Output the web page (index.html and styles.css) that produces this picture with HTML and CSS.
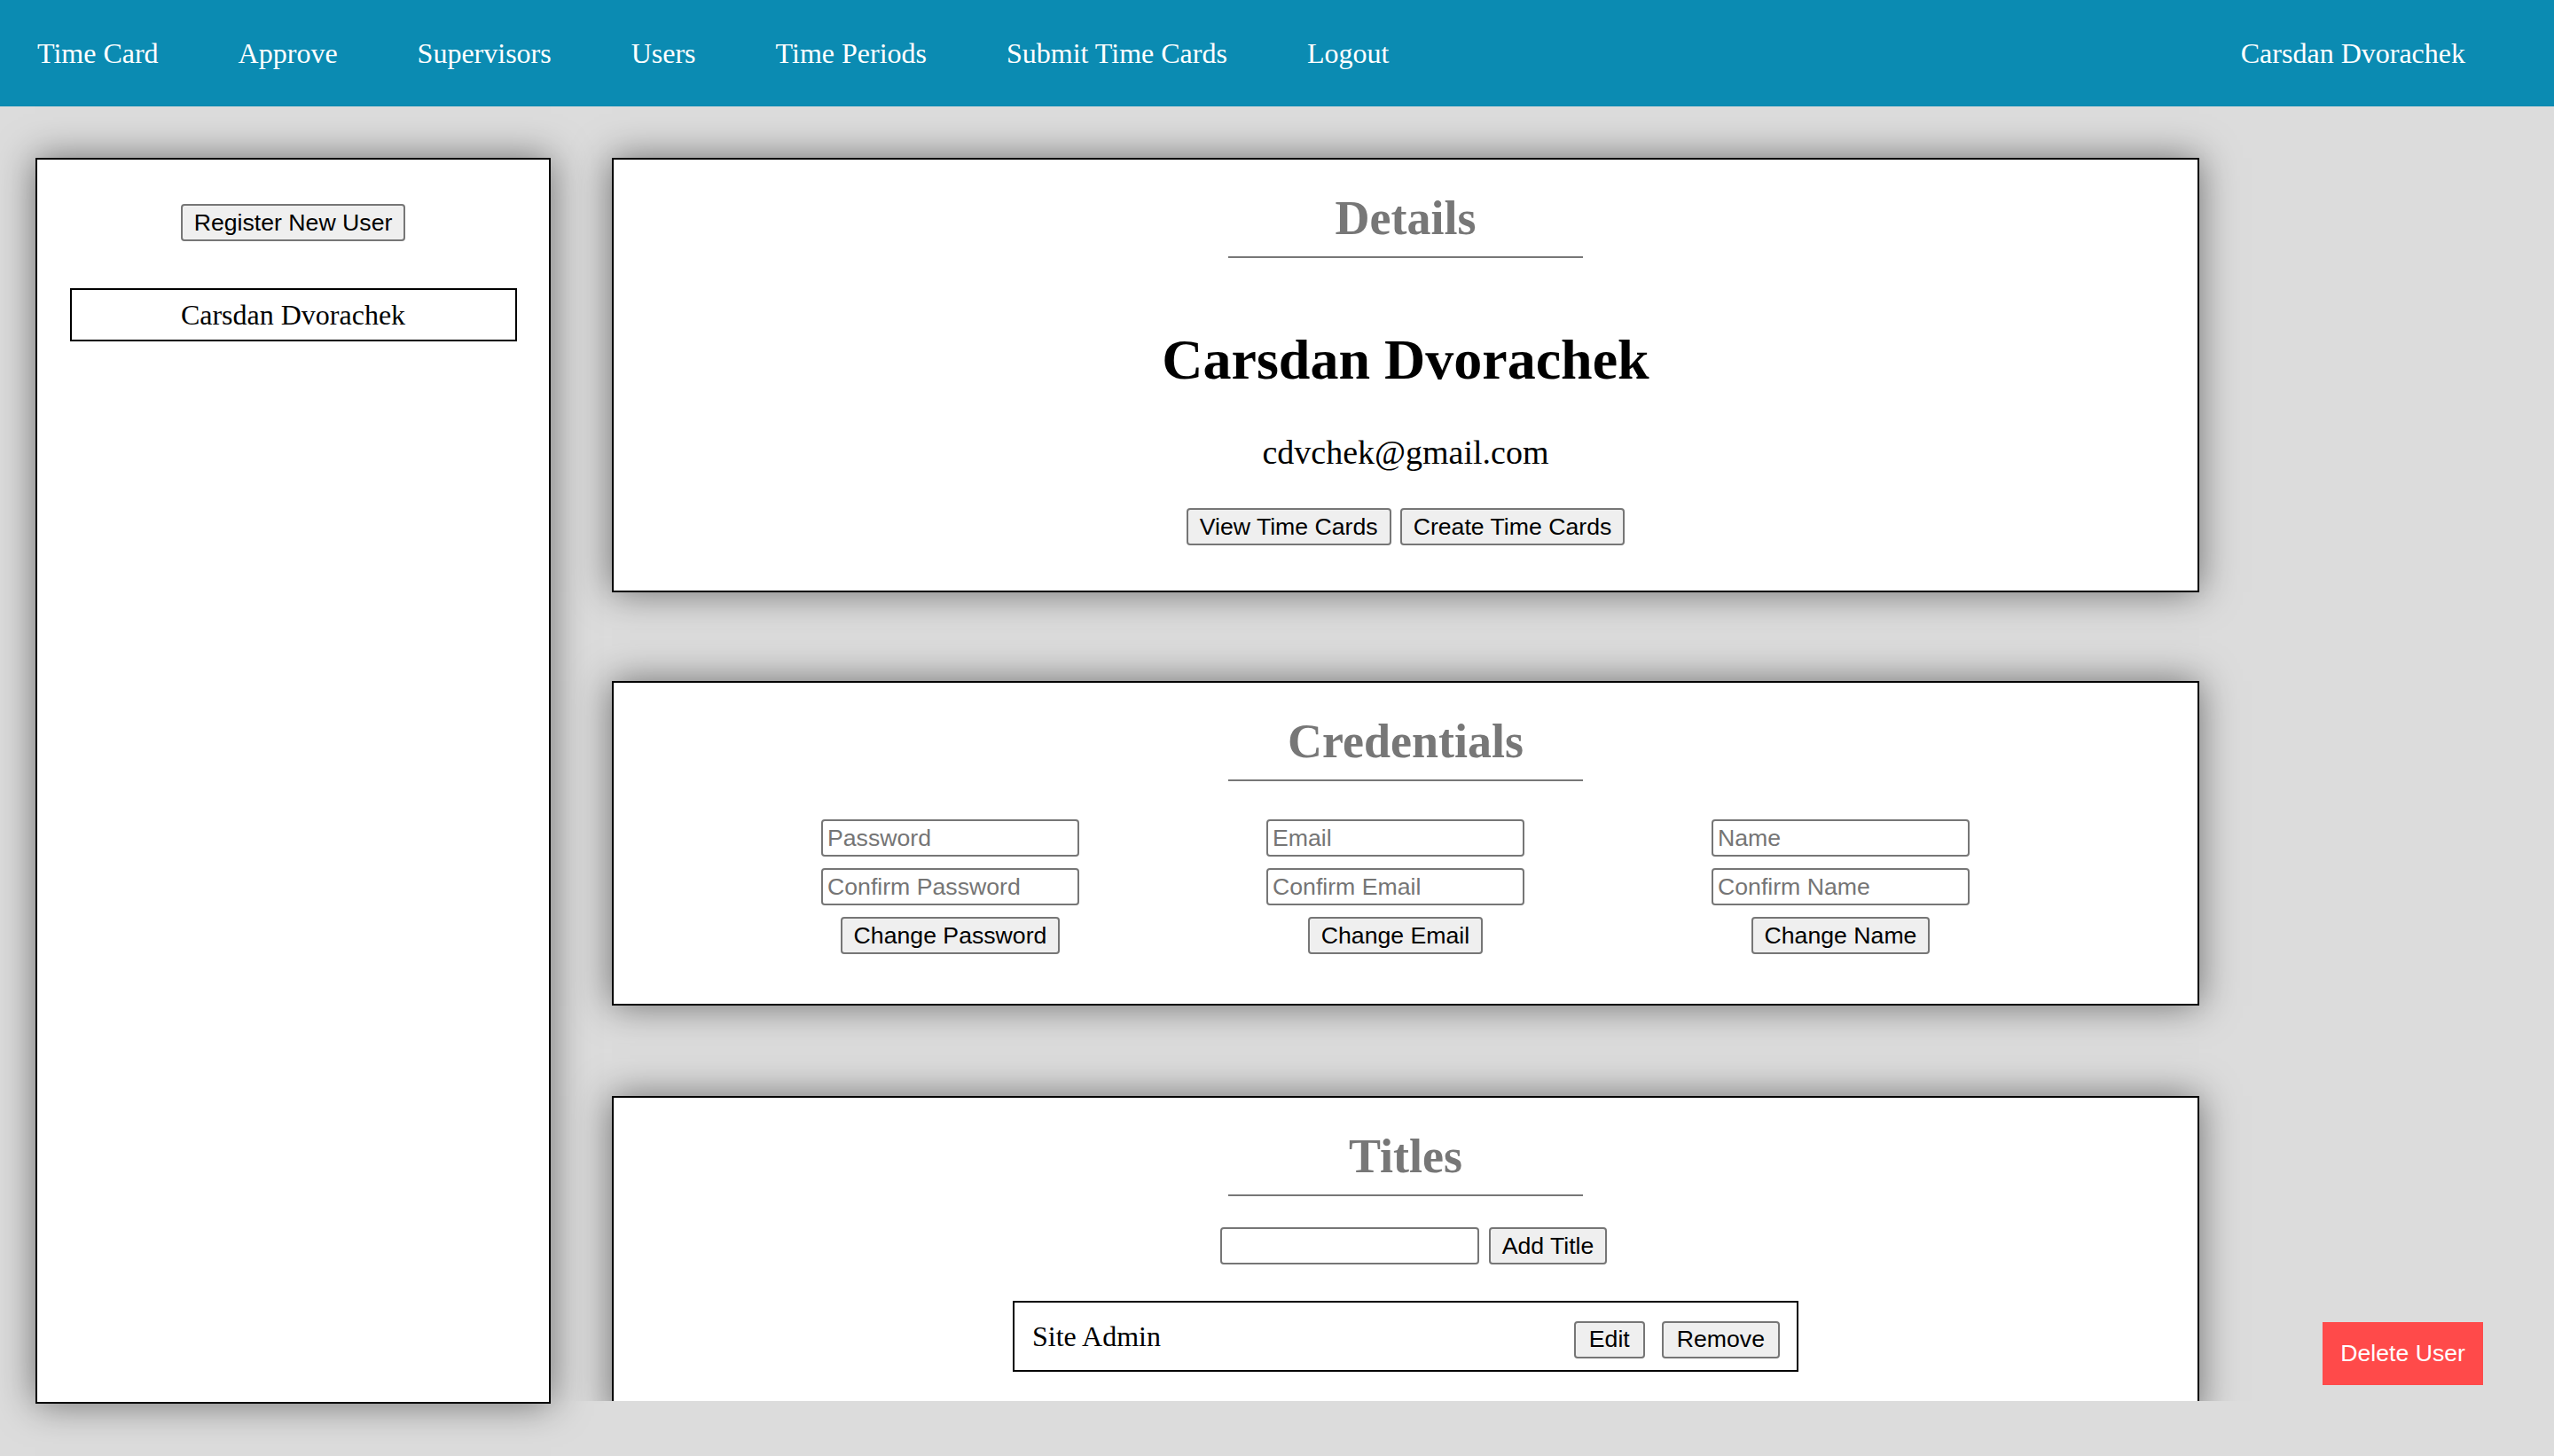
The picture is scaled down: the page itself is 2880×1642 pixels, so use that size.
FILE: index.html
```html
<!DOCTYPE html>
<html lang="en">
<head>
<meta charset="utf-8">
<title>Users</title>
<link rel="stylesheet" href="styles.css">
</head>
<body>
<nav class="topbar">
  <div class="nav-links">
    <a class="nav-link" href="#">Time Card</a>
    <a class="nav-link" href="#">Approve</a>
    <a class="nav-link" href="#">Supervisors</a>
    <a class="nav-link" href="#">Users</a>
    <a class="nav-link" href="#">Time Periods</a>
    <a class="nav-link" href="#">Submit Time Cards</a>
    <a class="nav-link" href="#">Logout</a>
  </div>
  <div class="nav-user">Carsdan Dvorachek</div>
</nav>
<div class="layout">
  <aside class="sidebar">
    <div class="sidebar-panel">
      <button class="btn">Register New User</button>
      <div class="user-item">Carsdan Dvorachek</div>
    </div>
  </aside>
  <main class="content">
    <section class="panel panel-details">
      <h2 class="panel-title">Details</h2>
      <h1 class="user-name">Carsdan Dvorachek</h1>
      <p class="user-email">cdvchek@gmail.com</p>
      <div class="details-actions">
        <button class="btn">View Time Cards</button>
        <button class="btn">Create Time Cards</button>
      </div>
    </section>
    <section class="panel panel-credentials">
      <h2 class="panel-title">Credentials</h2>
      <div class="cred-grid">
        <div class="cred-col">
          <input class="field" type="password" placeholder="Password">
          <input class="field" type="password" placeholder="Confirm Password">
          <button class="btn">Change Password</button>
        </div>
        <div class="cred-col">
          <input class="field" type="text" placeholder="Email">
          <input class="field" type="text" placeholder="Confirm Email">
          <button class="btn">Change Email</button>
        </div>
        <div class="cred-col">
          <input class="field" type="text" placeholder="Name">
          <input class="field" type="text" placeholder="Confirm Name">
          <button class="btn">Change Name</button>
        </div>
      </div>
    </section>
    <section class="panel panel-titles">
      <h2 class="panel-title">Titles</h2>
      <div class="title-add">
        <input class="field field-title" type="text">
        <button class="btn">Add Title</button>
      </div>
      <div class="title-list">
        <div class="title-item">
          <span class="title-name">Site Admin</span>
          <div class="title-actions">
            <button class="btn btn-wide">Edit</button>
            <button class="btn btn-wide">Remove</button>
          </div>
        </div>
      </div>
    </section>
  </main>
</div>
<button class="delete-user">Delete User</button>
</body>
</html>
```
FILE: styles.css
```css
html, body {
  margin: 0;
  padding: 0;
}

body {
  background: #dcdcdc;
  font-family: "Liberation Serif", "Times New Roman", serif;
  color: #000;
  height: 100vh;
  overflow: hidden;
}

.topbar {
  height: 120px;
  background: #0b8bb2;
  display: flex;
  align-items: center;
  color: #fff;
  font-size: 32px;
}

.nav-links {
  display: flex;
  gap: 90px;
  padding-left: 42px;
}

.nav-link {
  color: #fff;
  text-decoration: none;
}

.nav-user {
  margin-left: auto;
  padding-right: 100px;
}

.layout {
  display: flex;
  height: calc(100vh - 120px);
}

.sidebar {
  flex: none;
  width: 621px;
  box-sizing: border-box;
  padding: 58px 0 0 40px;
}

.sidebar-panel {
  height: 1405px;
  box-sizing: border-box;
  border: 2px solid #000;
  background: #fff;
  box-shadow: 0 0 40px rgba(0, 0, 0, 0.5);
  padding-top: 50px;
  text-align: center;
}

.user-item {
  width: 504px;
  height: 60px;
  box-sizing: border-box;
  margin: 53px auto 0;
  border: 2px solid #000;
  display: flex;
  align-items: center;
  justify-content: center;
  font-size: 32px;
}

.content {
  flex: 1;
  height: 1460px;
  overflow: hidden;
  box-sizing: border-box;
  padding: 58px 0 0 69px;
}

.panel {
  width: 1790px;
  box-sizing: border-box;
  border: 2px solid #000;
  background: #fff;
  box-shadow: 0 0 40px rgba(0, 0, 0, 0.5);
  padding-top: 35px;
  text-align: center;
}

.panel-details {
  padding-bottom: 51px;
}

.panel-credentials {
  margin-top: 100px;
  padding-bottom: 56px;
}

.panel-titles {
  margin-top: 102px;
  padding-bottom: 50px;
}

.panel-title {
  width: 400px;
  margin: 0 auto;
  padding-bottom: 12px;
  border-bottom: 2px solid #777;
  font-size: 54px;
  line-height: 62px;
  font-weight: bold;
  color: #777;
}

.user-name {
  margin: 78px 0 0;
  font-size: 64px;
  line-height: 74px;
  font-weight: bold;
}

.user-email {
  margin: 45px 0 0;
  font-size: 38px;
  line-height: 44px;
}

.details-actions {
  margin-top: 41px;
  display: flex;
  justify-content: center;
  gap: 10px;
}

.btn {
  height: 42px;
  box-sizing: border-box;
  padding: 0 13px;
  border: 2px solid #767676;
  border-radius: 4px;
  background: #efefef;
  color: #000;
  font-family: "Liberation Sans", Arial, sans-serif;
  font-size: 26.67px;
  line-height: 1;
  cursor: pointer;
}

.btn-wide {
  padding: 0 15px;
}

.field {
  width: 291px;
  height: 42px;
  box-sizing: border-box;
  padding: 0 5px;
  border: 2px solid #767676;
  border-radius: 4px;
  background: #fff;
  font-family: "Liberation Sans", Arial, sans-serif;
  font-size: 26.67px;
  color: #000;
}

.field::placeholder {
  color: #757575;
}

.cred-grid {
  margin-top: 43px;
  display: flex;
  justify-content: center;
  gap: 211px;
  padding-right: 23px;
}

.cred-col {
  display: flex;
  flex-direction: column;
  align-items: center;
  gap: 13px;
}

.title-add {
  margin-top: 35px;
  display: flex;
  justify-content: center;
  gap: 11px;
  padding-left: 18px;
}

.field-title {
  width: 292px;
}

.title-list {
  width: 886px;
  margin: 41px auto 0;
}

.title-item {
  height: 80px;
  box-sizing: border-box;
  border: 2px solid #000;
  display: flex;
  align-items: center;
  padding: 0 19px 0 20px;
  text-align: left;
  font-size: 32px;
}

.title-name {
  flex: 1;
}

.title-actions {
  display: flex;
  gap: 19px;
  margin-top: 7px;
}

.delete-user {
  position: fixed;
  right: 80px;
  bottom: 80px;
  padding: 20px;
  border: none;
  background: #ff4a4a;
  color: #fff;
  font-family: "Liberation Sans", Arial, sans-serif;
  font-size: 26.67px;
  line-height: normal;
  cursor: pointer;
}
```
